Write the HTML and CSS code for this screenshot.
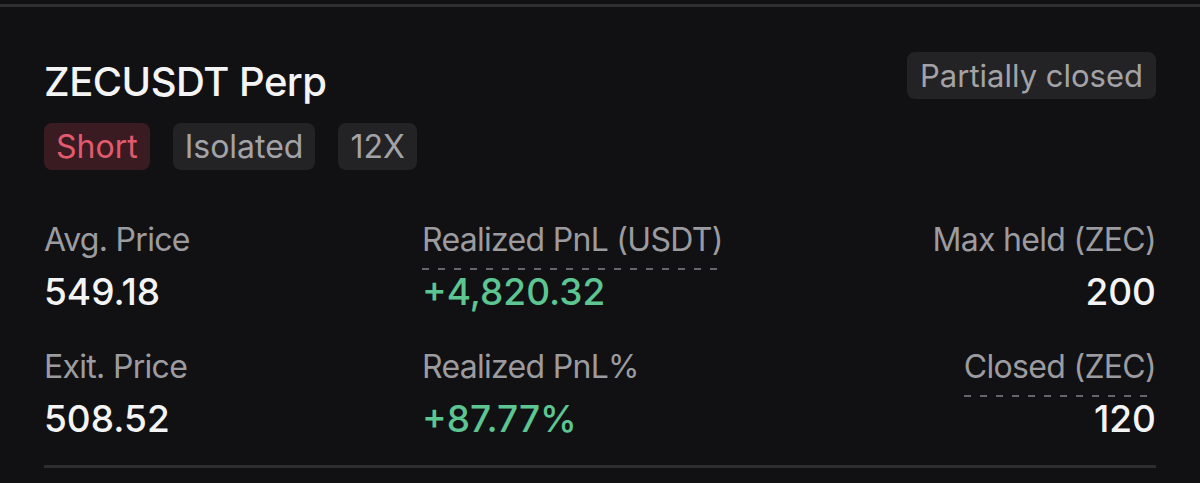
FILE: index.html
```html
<!DOCTYPE HTML>
<html>

<head>
  <title>Position | ZECUSDT</title>
  <meta name="viewport" content="width=device-width, initial-scale=1">
  <link rel="stylesheet" href="styles.css">
</head>

<body>
  <div class="top-rule"></div>
  <main class="position">
    <header class="position-head">
      <div class="title">
        <h2>ZECUSDT Perp</h2>
        <div class="tags">
          <span class="tag short">Short</span>
          <span class="tag">Isolated</span>
          <span class="tag">12X</span>
        </div>
      </div>
      <span class="tag status">Partially closed</span>
    </header>
    <section class="stats">
      <div class="stat">
        <span class="label">Avg. Price</span>
        <span class="value">549.18</span>
      </div>
      <div class="stat">
        <span class="label dashed">Realized PnL (USDT)</span>
        <span class="value up">+4,820.32</span>
      </div>
      <div class="stat right">
        <span class="label">Max held (ZEC)</span>
        <span class="value">200</span>
      </div>
      <div class="stat">
        <span class="label">Exit. Price</span>
        <span class="value">508.52</span>
      </div>
      <div class="stat">
        <span class="label">Realized PnL%</span>
        <span class="value up">+87.77%</span>
      </div>
      <div class="stat right">
        <span class="label dashed">Closed (ZEC)</span>
        <span class="value">120</span>
      </div>
    </section>
  </main>
</body>

</html>
```

FILE: styles.css
```css
body {
  margin: 0;
  background-color: #111113;
  color: #f4f4f5;
  font-family: Inter, "Noto Sans", sans-serif;
  height: 483px;
  overflow: hidden;
}

.top-rule {
  margin-top: 4px;
  height: 3px;
  background: #2f2f32;
}

.position {
  margin: 0 44px;
  padding-top: 45px;
  padding-bottom: 23px;
  border-bottom: 3px solid #2e2e31;
}

.position-head {
  display: flex;
  justify-content: space-between;
  align-items: flex-start;
}

.title {
  margin-top: 6px;
}

h2 {
  margin: 0;
  font-size: 40px;
  font-weight: 500;
  line-height: 48px;
  letter-spacing: -0.5px;
}

.tags {
  display: flex;
  gap: 23px;
  margin-top: 17px;
}

.tag {
  display: inline-block;
  padding: 0 12px;
  height: 47px;
  line-height: 47px;
  border-radius: 8px;
  background: #232326;
  color: #a3a3a7;
  font-size: 32px;
}

.short {
  background: #3b1b22;
  color: #e25a6e;
}

.status {
  font-size: 31px;
  padding: 0 13px;
}

.stats {
  display: grid;
  grid-template-columns: 378px 1fr auto;
  margin-top: 50px;
  row-gap: 32px;
}

.stat {
  display: flex;
  flex-direction: column;
  align-items: flex-start;
}

.right {
  align-items: flex-end;
}

.label {
  color: #9c9ca0;
  font-size: 32px;
  line-height: 40px;
  letter-spacing: -0.7px;
}

.dashed {
  padding-bottom: 10px;
  background: repeating-linear-gradient(to right, #66666a 0 7px, transparent 7px 16px) bottom / 100% 2px no-repeat;
}

.value {
  font-size: 37px;
  font-weight: 500;
  line-height: 46px;
  margin-top: 9px;
}

.dashed + .value {
  margin-top: -1px;
}

.up {
  color: #5cc592;
}
```
